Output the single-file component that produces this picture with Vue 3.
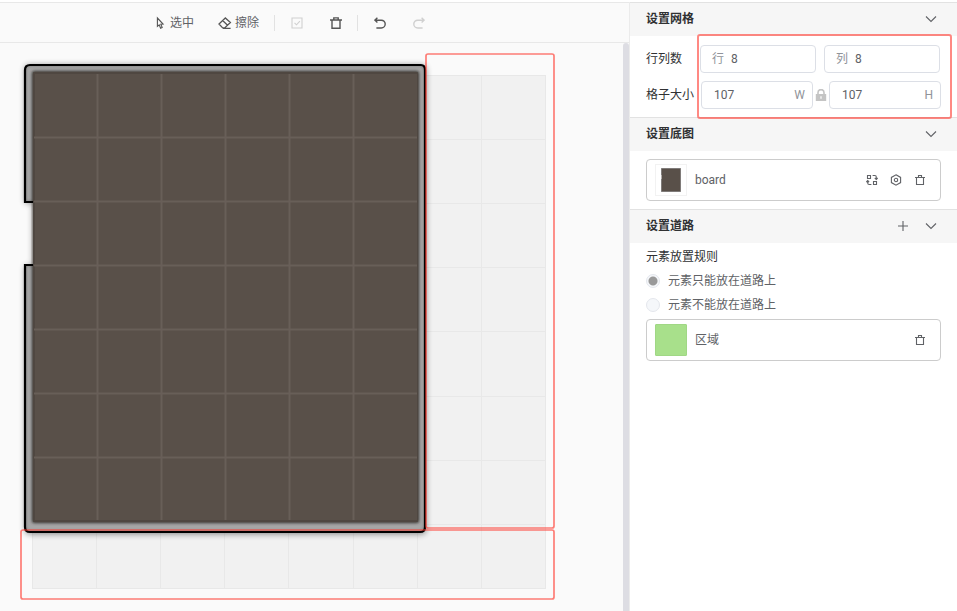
<script setup>
import { ref } from 'vue'

const rows = ref(8)
const cols = ref(8)
const cellWidth = ref(107)
const cellHeight = ref(107)
const rule = ref('on')

const grid = { left: 32, top: 32, step: 64.1 }
const gridX = Array.from({ length: 9 }, (_, i) => Math.round(grid.left + i * grid.step) + 0.5)
const gridY = Array.from({ length: 9 }, (_, i) => Math.round(grid.top + i * grid.step) + 0.5)
const boardX = Array.from({ length: 5 }, (_, i) => 97.5 + i * 64)
const boardY = Array.from({ length: 6 }, (_, i) => 94.5 + i * 64)
</script>

<template>
  <div class="editor">
    <main class="workspace">
      <div class="toolbar">
        <button class="tool" type="button">
          <svg class="icon pointer" viewBox="0 0 10 14" aria-hidden="true">
            <path d="M2.4 2v8.3l1.8-1.5 1.4 3.4 1.6-.7-1.4-3.2 2.3-.2z" />
          </svg>
          <span>选中</span>
        </button>
        <button class="tool erase" type="button">
          <svg class="icon wide" viewBox="0 0 14 14" aria-hidden="true">
            <path d="M7.3 2 1 8l3.7 3.9h2L12.4 6.6zM4.6 4.6l5 4.6M5 12.3h7.6" />
          </svg>
          <span>擦除</span>
        </button>
        <span class="divider"></span>
        <button class="tool single faded" type="button" aria-label="全选" disabled>
          <svg class="icon" viewBox="0 0 12 12" aria-hidden="true">
            <path d="M1 1h10v10H1zM3.5 5.8l2 2 3.4-3.6" />
          </svg>
        </button>
        <button class="tool single second" type="button" aria-label="删除">
          <svg class="icon heavy" viewBox="0 0 12 12" aria-hidden="true">
            <path d="M0 3h12M2 3v8.3h8V3M3.8 2.8V.9h4.4v1.9" />
          </svg>
        </button>
        <span class="divider"></span>
        <button class="tool single" type="button" aria-label="撤销">
          <svg class="icon heavy" viewBox="0 0 12 12" aria-hidden="true">
            <path d="M3.4.8.9 3.2l2.5 2.4M1 3.2h6.3a3.9 3.9 0 0 1 0 7.8H2.4" />
          </svg>
        </button>
        <button class="tool single second faded" type="button" aria-label="重做" disabled>
          <svg class="icon heavy" viewBox="0 0 12 12" aria-hidden="true">
            <path d="m8.6.8 2.5 2.4-2.5 2.4M11 3.2H4.7a3.9 3.9 0 0 0 0 7.8h4.9" />
          </svg>
        </button>
      </div>

      <div class="stage">
        <svg class="canvas" width="600" height="566" viewBox="0 0 600 566" aria-label="board">
          <defs>
            <filter id="soft" x="-10%" y="-10%" width="120%" height="120%">
              <feGaussianBlur stdDeviation="3" />
            </filter>
            <filter id="edge" x="-10%" y="-10%" width="120%" height="120%">
              <feGaussianBlur stdDeviation="1.5" />
            </filter>
            <clipPath id="frame-clip">
              <path d="M33 159h-8V27q0-5 5-5h391q5 0 5 5v457q0 5-5 5H30q-5 0-5-5V222h8z" />
            </clipPath>
          </defs>
          <rect x="32" y="32" width="514" height="514" fill="#f1f1f1" />
          <g stroke="#e8e8e8">
            <line v-for="x in gridX" :key="'gx' + x" :x1="x" :x2="x" y1="32" y2="546" />
            <line v-for="y in gridY" :key="'gy' + y" :y1="y" :y2="y" x1="32" x2="546" />
          </g>
          <path d="M33 160h-8V27q0-5 5-5h391q5 0 5 5v459q0 5-5 5H30q-5 0-5-5V223h8z" fill="#000" opacity=".45" filter="url(#soft)" />
          <rect x="32" y="154" width="6" height="76" fill="#55504a" opacity=".6" filter="url(#edge)" />
          <path d="M33 159h-8V27q0-5 5-5h391q4 0 4 5v457q0 5-5 5H30q-5 0-5-5V222h8z" fill="#a6a6a6" />
          <g clip-path="url(#frame-clip)">
            <path d="M33 159h-8V27q0-5 5-5h391q4 0 4 5v457q0 5-5 5H30q-5 0-5-5V222h8" fill="none" stroke="#222" stroke-width="2" opacity=".35" filter="url(#edge)" />
            <rect x="32" y="28" width="387" height="452" rx="2" fill="#34302d" filter="url(#edge)" />
          </g>
          <rect x="33" y="29" width="385" height="450" rx="1" fill="#4f4741" />
          <rect x="35" y="31" width="382" height="446" fill="#595049" />
          <g stroke="#685f58" stroke-width="2">
            <line v-for="x in boardX" :key="'bx' + x" :x1="x" :x2="x" y1="31" y2="477" />
            <line v-for="y in boardY" :key="'by' + y" :y1="y" :y2="y" x1="34" x2="417" />
          </g>
          <path d="M33 159h-8V27q0-5 5-5h391q4 0 4 5v457q0 5-5 5H30q-5 0-5-5V222h8" fill="none" stroke="#000" stroke-width="2.2" />
          <g fill="none" stroke="#ff3b30" stroke-opacity=".65" stroke-width="1.7">
            <rect x="426" y="11" width="128" height="474" rx="2" />
            <rect x="21" y="487" width="533" height="69" rx="2" />
          </g>
        </svg>
        <div class="scrollbar"></div>
      </div>
    </main>

    <aside class="panel">
      <section class="section">
        <header class="section-head">
          <h2>设置网格</h2>
          <button class="icon-button" type="button" aria-label="收起网格">
            <svg class="icon" viewBox="0 0 12 12" aria-hidden="true"><path d="m1 3.5 5 5 5-5" /></svg>
          </button>
        </header>
        <div class="form">
          <div class="field-row">
            <span class="field-label">行列数</span>
            <label class="field">
              <span class="unit">行</span>
              <input v-model="rows" type="text" />
            </label>
            <label class="field spaced">
              <span class="unit">列</span>
              <input v-model="cols" type="text" />
            </label>
          </div>
          <div class="field-row">
            <span class="field-label size">格子大小</span>
            <label class="field roomy">
              <input v-model="cellWidth" type="text" />
              <span class="unit">W</span>
            </label>
            <svg class="lock" viewBox="0 0 12 12" aria-hidden="true">
              <path d="M3 5.5V3.6a3 3 0 0 1 6 0v1.9" fill="none" stroke="#c4c4c4" stroke-width="1.6" />
              <path d="M.8 5h10.4v7H.8z" fill="#c4c4c4" />
              <path d="M5.4 7.2h1.2v2.6H5.4z" fill="#fff" />
            </svg>
            <label class="field roomy">
              <input v-model="cellHeight" type="text" />
              <span class="unit">H</span>
            </label>
          </div>
          <div class="highlight"></div>
        </div>
      </section>

      <section class="section">
        <header class="section-head">
          <h2>设置底图</h2>
          <button class="icon-button" type="button" aria-label="收起底图">
            <svg class="icon" viewBox="0 0 12 12" aria-hidden="true"><path d="m1 3.5 5 5 5-5" /></svg>
          </button>
        </header>
        <div class="section-body">
          <div class="card">
            <span class="thumb">
              <svg width="20" height="24" viewBox="0 0 20 24" aria-hidden="true">
                <path d="M0 0h20v24H0V11h.8V7H0z" fill="#999" />
                <path d="M.6.6h18.8v22.8H.6z" fill="#595049" />
              </svg>
            </span>
            <span class="card-name">board</span>
            <button class="icon-button" type="button" aria-label="替换">
              <svg class="icon" viewBox="0 0 12 12" aria-hidden="true">
                <path d="M1.5 1.5h3v3h-3zM7.5 7.5h3v3h-3zM6.6 1.5h2.2q1.5 0 1.5 1.5v2M8.8 4l1.5 1.4L11.7 4M5.4 10.5H3.2q-1.5 0-1.5-1.5V7M.3 8l1.4-1.4L3.1 8" />
              </svg>
            </button>
            <button class="icon-button" type="button" aria-label="设置">
              <svg class="icon" viewBox="0 0 12 12" aria-hidden="true">
                <path d="m6 .8 4.6 2.6v5.2L6 11.2 1.4 8.6V3.4z" /><circle cx="6" cy="6" r="1.7" />
              </svg>
            </button>
            <button class="icon-button" type="button" aria-label="删除底图">
              <svg class="icon" viewBox="0 0 12 12" aria-hidden="true">
                <path d="M1 3.5h10M2.5 3.5v7h7v-7M4.5 3.2V1.5h3v1.7" />
              </svg>
            </button>
          </div>
        </div>
      </section>

      <section class="section">
        <header class="section-head">
          <h2>设置道路</h2>
          <button class="icon-button add" type="button" aria-label="添加道路">
            <svg class="icon" viewBox="0 0 12 12" aria-hidden="true"><path d="M6 1v10M1 6h10" /></svg>
          </button>
          <button class="icon-button" type="button" aria-label="收起道路">
            <svg class="icon" viewBox="0 0 12 12" aria-hidden="true"><path d="m1 3.5 5 5 5-5" /></svg>
          </button>
        </header>
        <div class="section-body roads">
          <p class="rule-title">元素放置规则</p>
          <label class="rule"><input v-model="rule" type="radio" name="rule" value="on" />元素只能放在道路上</label>
          <label class="rule"><input v-model="rule" type="radio" name="rule" value="off" />元素不能放在道路上</label>
          <div class="card road-card">
            <span class="swatch"></span>
            <span class="card-name">区域</span>
            <button class="icon-button" type="button" aria-label="删除区域">
              <svg class="icon" viewBox="0 0 12 12" aria-hidden="true">
                <path d="M1 3.5h10M2.5 3.5v7h7v-7M4.5 3.2V1.5h3v1.7" />
              </svg>
            </button>
          </div>
        </div>
      </section>
    </aside>
  </div>
</template>

<style>
body {
  background: #fff;
  overflow: hidden;
}
</style>

<style scoped>
.editor {
  display: flex;
  height: 100vh;
  box-sizing: border-box;
  padding-top: 2px;
  font: 12px/24px Roboto, "Noto Sans CJK SC", sans-serif;
  color: #606266;
}
.editor * {
  box-sizing: border-box;
}
.workspace {
  flex: 1;
  min-width: 0;
  display: flex;
  flex-direction: column;
  background: #fafafa;
  border-top: 1px solid #e8e8e8;
}
.toolbar {
  display: flex;
  align-items: center;
  height: 40px;
  padding-left: 155px;
  border-bottom: 1px solid #e8e8e8;
  flex: none;
}
button {
  display: flex;
  align-items: center;
  padding: 0;
  border: 0;
  background: none;
  font: inherit;
  color: inherit;
  flex: none;
}
.icon {
  width: 12px;
  height: 12px;
  display: block;
  fill: none;
  stroke: #606266;
  stroke-width: 1.1;
}
.tool {
  gap: 5px;
}
.tool .pointer {
  width: 10px;
  height: 14px;
}
.tool .wide {
  width: 14px;
  height: 14px;
  stroke-width: 1.3;
}
.tool .icon {
  stroke: #555;
}
.tool .heavy {
  stroke-width: 1.4;
}
.erase {
  margin-left: 24px;
  gap: 3px;
}
.divider {
  width: 1px;
  height: 16px;
  margin-left: 15px;
  background: #e2e2e2;
}
.single {
  margin-left: 16px;
}
.second {
  margin-left: 27px;
}
.faded .icon {
  stroke: #d0d0d0;
}
.stage {
  flex: 1;
  min-height: 0;
  display: flex;
  justify-content: space-between;
  overflow: hidden;
}
.canvas {
  flex: none;
}
.scrollbar {
  flex: none;
  width: 6px;
  background: #dddde3;
  border-radius: 3px 3px 0 0;
}
.panel {
  flex: none;
  width: 328px;
  border-left: 1px solid #ebebeb;
  background: #fff;
}
.section {
  border-top: 1px solid #e2e2e2;
}
.section-head {
  display: flex;
  align-items: center;
  height: 33px;
  padding: 0 20px 2px 16px;
  background: #f6f6f6;
}
h2 {
  flex: 1;
  margin: 0;
  font-size: 12px;
  font-weight: 700;
  color: #303133;
}
.add {
  margin-right: 16px;
}
.form {
  position: relative;
  display: grid;
  gap: 8px;
  padding: 9px 16px 8px;
}
.field-row {
  display: flex;
  align-items: center;
  color: #303133;
}
.field-label {
  flex: none;
  width: 54px;
}
.field-label.size {
  width: 55px;
}
.field {
  flex: 1;
  min-width: 0;
  display: flex;
  align-items: center;
  gap: 7px;
  height: 28px;
  padding: 0 11px;
  border: 1px solid #dcdfe6;
  border-radius: 4px;
  background: #fff;
}
.field.spaced {
  margin-left: 8px;
  margin-right: 1px;
}
.field.roomy {
  padding: 0 7px 0 12px;
}
.field input {
  flex: 1;
  min-width: 0;
  width: 0;
  padding: 0;
  border: 0;
  outline: 0;
  background: none;
  font: inherit;
  color: #606266;
}
.unit {
  color: #909399;
}
.lock {
  flex: none;
  width: 12px;
  height: 12px;
  margin: 0 2px;
}
.highlight {
  position: absolute;
  top: -2px;
  right: 5px;
  bottom: -2px;
  left: 67px;
  border: 2px solid rgba(255, 59, 48, 0.6);
  border-radius: 3px;
  pointer-events: none;
}
.section-body {
  padding: 8px 16px;
}
.roads {
  padding-top: 2px;
}
.card {
  display: flex;
  align-items: center;
  gap: 12px;
  height: 42px;
  padding: 0 14px 0 8px;
  border: 1px solid #ccc;
  border-radius: 4px;
}
.road-card {
  margin-top: 2px;
}
.thumb,
.swatch {
  flex: none;
  width: 32px;
  height: 32px;
  margin-right: -4px;
}
.thumb {
  display: grid;
  place-items: center;
  border: 1px solid #f2f2f2;
}
.swatch {
  background: #a8e08b;
  border: 1px solid #a0d785;
  border-radius: 1px;
}
.card-name {
  flex: 1;
}
.rule-title {
  margin: 0;
  color: #303133;
}
.rule {
  display: flex;
  align-items: center;
  gap: 8px;
}
.rule input {
  appearance: none;
  width: 14px;
  height: 14px;
  margin: 0;
  border: 1px solid #e4e7ed;
  border-radius: 50%;
  background: #f5f7fa;
}
.rule input:checked {
  background: radial-gradient(circle, #999 4px, #f5f7fa 5px);
}
</style>
